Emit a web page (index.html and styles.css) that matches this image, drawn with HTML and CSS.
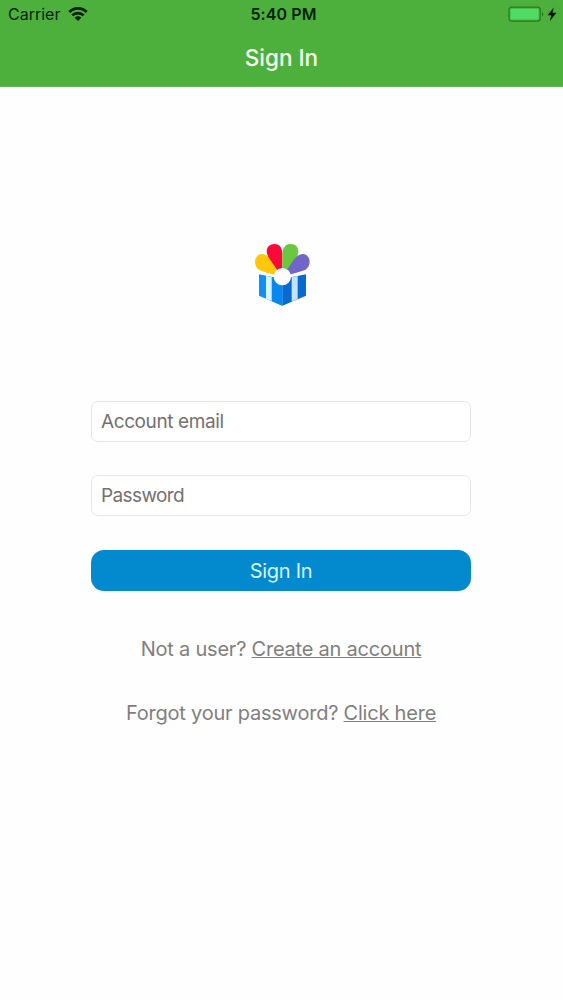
FILE: index.html
```html
<!DOCTYPE html>
<html lang="en">
<head>
    <meta charset="UTF-8">
    <title>Sign In</title>
    <link rel="stylesheet" href="styles.css">
</head>
<body>
    <header class="header">
        <div class="status-bar">
            <div class="carrier">
                <span>Carrier</span>
                <svg class="wifi" viewBox="0 0 20 14" width="20" height="14">
                    <path d="M1.3 5a12.4 12.4 0 0 1 17.4 0M4.3 8.4a8.1 8.1 0 0 1 11.4 0" fill="none" stroke="#031f01" stroke-width="2.7"/>
                    <path d="M6.7 10.7a4.7 4.7 0 0 1 6.6 0L10 14z" fill="#031f01"/>
                </svg>
            </div>
            <div class="time">5:40 PM</div>
            <div class="battery">
                <svg viewBox="0 0 50 18" width="50" height="18">
                    <rect x="1" y="2.2" width="31.2" height="14" rx="2.6" fill="#4cb03d" stroke="#2b7a20" stroke-width="1.2"/>
                    <rect x="2.6" y="3.8" width="28" height="10.8" rx="1.2" fill="#50db66"/>
                    <path d="M34 6.8q2.6 2.4 0 4.8z" fill="#25701b"/>
                    <path d="M45.8 2.4L39.6 10.2h3.7l-1.5 6 6.6-8.4h-3.9z" fill="#031402"/>
                </svg>
            </div>
        </div>
        <h1 class="title">Sign In</h1>
    </header>

    <main class="container">
        <svg class="logo" viewBox="0 0 225 240" width="75" height="80">
            <!-- petals -->
            <path d="M112 125L86 119Q58 111 43 105C22 92 28 57 51 57C63 57 72 66 79 76Z" fill="#ffc70a"/>
            <path d="M112 125L93 100L74 72C56 47 68 27 88 27C107 27 112 42 112 58Z" fill="#fb0938"/>
            <path d="M112 125V58C112 42 119 27 137 27C159 27 168 49 152 73L133 100Z" fill="#6bc83e"/>
            <path d="M112 125L145 76C152 66 163 57 174 57C197 58 202 94 178 106Q160 112 138 118Z" fill="#7065c9"/>
            <!-- box -->
            <path d="M42 118L112 132V212L42 182Z" fill="#1090f6"/>
            <path d="M183 118L112 132V212L183 182Z" fill="#0869cf"/>
            <path d="M80 126L112 132V212L80 198Z" fill="#0788ef"/>
            <path d="M63 122L80 126V198L63 191Z" fill="#dcf3ff"/>
            <path d="M140 127L158 123V192L140 200Z" fill="#c1e4fa"/>
            <circle cx="112" cy="125" r="26" fill="#fff"/>
        </svg>

        <form class="form">
            <input type="text" placeholder="Account email">
            <input type="password" placeholder="Password">
            <button type="button">Sign In</button>
        </form>

        <p class="signup">Not a user? <a href="#">Create an account</a></p>
        <p class="forgot">Forgot your password? <a href="#">Click here</a></p>
    </main>
</body>
</html>
```

FILE: styles.css
```css
* {
    box-sizing: border-box;
}
body {
    margin: 0;
    min-height: 1000px;
    background: #fefefe;
    font-family: Inter, "Liberation Sans", sans-serif;
}
.header {
    height: 87px;
    background: #4daf3c;
    border-bottom: 1px solid #65b757;
}
.status-bar {
    display: grid;
    grid-template-columns: 1fr auto 1fr;
    align-items: center;
    height: 29px;
    padding: 0 5px 0 8px;
    color: #031f01;
}
.carrier {
    display: flex;
    align-items: center;
    gap: 8px;
    font-size: 16px;
}
.carrier span {
    margin-top: -1px;
}
.wifi {
    margin-top: -2px;
}
.time {
    margin: -1px 0 0 1px;
    font-size: 16px;
    font-weight: 600;
    letter-spacing: 0.1px;
}
.battery {
    display: flex;
    justify-content: flex-end;
}
.battery svg {
    margin-top: -2px;
}
.title {
    margin: 15px 0 0;
    color: #f4fff0;
    font-size: 22.5px;
    font-weight: 500;
    line-height: 28px;
    text-align: center;
}
.container {
    display: flex;
    flex-direction: column;
    align-items: center;
    width: 562px;
    padding-top: 148px;
}
.logo {
    display: block;
    margin-left: 2px;
}
.form {
    display: flex;
    flex-direction: column;
    width: 380px;
    margin-top: 86px;
}
input {
    height: 41px;
    margin: 0 0 33px;
    padding: 0 9px;
    border: 1px solid #e6e6e6;
    border-radius: 7px;
    outline: none;
    background: #fff;
    font-family: inherit;
    font-size: 19px;
    letter-spacing: -0.4px;
}
input[type="password"] {
    letter-spacing: -0.6px;
}
input::placeholder {
    color: #737073;
}
button {
    height: 41px;
    margin-top: 1px;
    padding: 0;
    border: 0;
    border-radius: 13px;
    background: #038ace;
    color: #d9f7ff;
    font-family: inherit;
    font-size: 20px;
    letter-spacing: -0.3px;
}
p {
    margin: 0;
    color: #817e81;
    font-size: 20px;
    letter-spacing: -0.22px;
    line-height: 24px;
}
.signup {
    margin-top: 46px;
}
.forgot {
    margin-top: 40px;
}
a {
    color: inherit;
    text-decoration: underline;
    text-decoration-thickness: 1px;
    text-underline-offset: 1px;
    text-decoration-skip-ink: none;
}
```
